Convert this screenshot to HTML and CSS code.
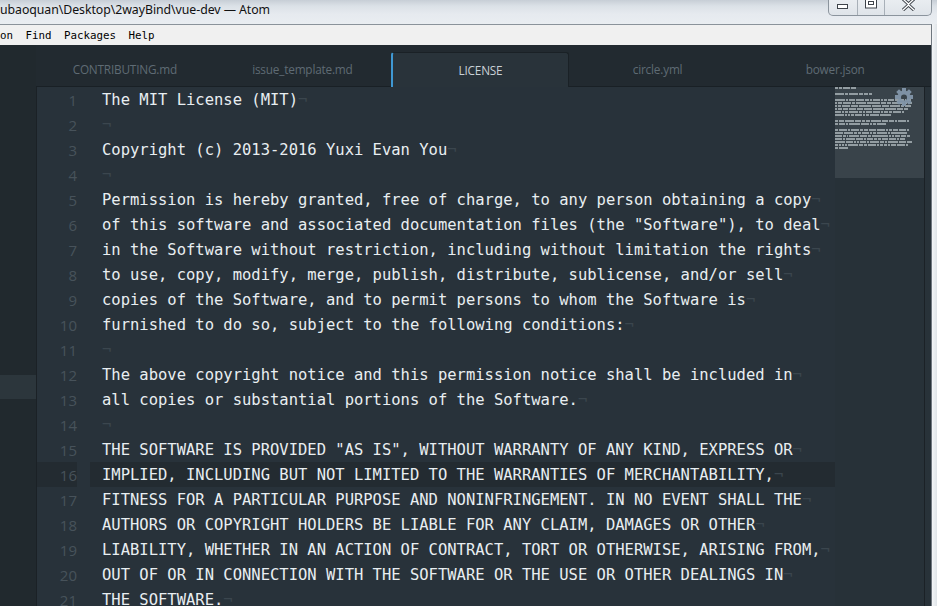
FILE: index.html
```html
<!DOCTYPE html>
<html>
<head>
<meta charset="utf-8">
<link rel="stylesheet" href="styles.css">
</head>
<body>
<div class="titlebar">
  <span class="title">ubaoquan\Desktop\2wayBind\vue-dev — Atom</span>
  <div class="winbtns">
    <div class="wb wb-min"><svg width="12" height="6" viewBox="0 0 12 6"><rect x="0.5" y="0.5" width="10" height="4" fill="#fff" stroke="#3d434a"/></svg></div>
    <div class="wb wb-max"><svg width="13" height="10" viewBox="0 0 13 10"><rect x="0.5" y="-1" width="11" height="9" fill="#fff" stroke="#3d434a"/><rect x="3.5" y="1.5" width="5" height="3" fill="none" stroke="#3d434a"/></svg></div>
    <div class="wb wb-close"><svg width="13" height="11" viewBox="0 0 13 11"><path d="M1 -1 L6.5 4 L12 -1 M1 10 L6.5 5 L12 10" stroke="#3d434a" stroke-width="3.2" fill="none"/><path d="M1 -1 L6.5 4 L12 -1 M1 10 L6.5 5 L12 10" stroke="#fff" stroke-width="1.3" fill="none"/></svg></div>
  </div>
</div>
<div class="main">
  <div class="client">
    <div class="menubar">
      <span>on</span><span>Find</span><span>Packages</span><span>Help</span>
    </div>
    <div class="workspace">
      <div class="tree"><div class="tree-sel"></div></div>
      <div class="pane">
        <div class="tabs">
          <div class="tab">CONTRIBUTING.md</div>
          <div class="tab">issue_template.md</div>
          <div class="tab active">LICENSE</div>
          <div class="tab">circle.yml</div>
          <div class="tab">bower.json</div>
          <div class="tab-fill"></div>
        </div>
        <div class="editor">
          <div class="gutter">
            <div class="gn">1</div><div class="gn">2</div><div class="gn">3</div><div class="gn">4</div><div class="gn">5</div><div class="gn">6</div><div class="gn">7</div><div class="gn">8</div><div class="gn">9</div><div class="gn">10</div><div class="gn">11</div><div class="gn">12</div><div class="gn">13</div><div class="gn">14</div><div class="gn">15</div><div class="gn cur">16</div><div class="gn">17</div><div class="gn">18</div><div class="gn">19</div><div class="gn">20</div><div class="gn">21</div>
          </div>
          <div class="lines">
            <div class="ln"><span class="tx">The MIT License (MIT)</span><span class="eol">¬</span></div>
            <div class="ln"><span class="tx"></span><span class="eol">¬</span></div>
            <div class="ln"><span class="tx">Copyright (c) 2013-2016 Yuxi Evan You</span><span class="eol">¬</span></div>
            <div class="ln"><span class="tx"></span><span class="eol">¬</span></div>
            <div class="ln"><span class="tx">Permission is hereby granted, free of charge, to any person obtaining a copy</span><span class="eol">¬</span></div>
            <div class="ln"><span class="tx">of this software and associated documentation files (the "Software"), to deal</span><span class="eol">¬</span></div>
            <div class="ln"><span class="tx">in the Software without restriction, including without limitation the rights</span><span class="eol">¬</span></div>
            <div class="ln"><span class="tx">to use, copy, modify, merge, publish, distribute, sublicense, and/or sell</span><span class="eol">¬</span></div>
            <div class="ln"><span class="tx">copies of the Software, and to permit persons to whom the Software is</span><span class="eol">¬</span></div>
            <div class="ln"><span class="tx">furnished to do so, subject to the following conditions:</span><span class="eol">¬</span></div>
            <div class="ln"><span class="tx"></span><span class="eol">¬</span></div>
            <div class="ln"><span class="tx">The above copyright notice and this permission notice shall be included in</span><span class="eol">¬</span></div>
            <div class="ln"><span class="tx">all copies or substantial portions of the Software.</span><span class="eol">¬</span></div>
            <div class="ln"><span class="tx"></span><span class="eol">¬</span></div>
            <div class="ln"><span class="tx">THE SOFTWARE IS PROVIDED "AS IS", WITHOUT WARRANTY OF ANY KIND, EXPRESS OR</span><span class="eol">¬</span></div>
            <div class="ln cur"><span class="tx">IMPLIED, INCLUDING BUT NOT LIMITED TO THE WARRANTIES OF MERCHANTABILITY,</span><span class="eol">¬</span></div>
            <div class="ln"><span class="tx">FITNESS FOR A PARTICULAR PURPOSE AND NONINFRINGEMENT. IN NO EVENT SHALL THE</span><span class="eol">¬</span></div>
            <div class="ln"><span class="tx">AUTHORS OR COPYRIGHT HOLDERS BE LIABLE FOR ANY CLAIM, DAMAGES OR OTHER</span><span class="eol">¬</span></div>
            <div class="ln"><span class="tx">LIABILITY, WHETHER IN AN ACTION OF CONTRACT, TORT OR OTHERWISE, ARISING FROM,</span><span class="eol">¬</span></div>
            <div class="ln"><span class="tx">OUT OF OR IN CONNECTION WITH THE SOFTWARE OR THE USE OR OTHER DEALINGS IN</span><span class="eol">¬</span></div>
            <div class="ln"><span class="tx">THE SOFTWARE.</span><span class="eol">¬</span></div>
          </div>
          <div class="minimap">
            <div class="mm-view"></div>
            <svg class="mm-svg" width="89" height="70" viewBox="0 0 89 70"></svg>
            <svg class="gear" width="18" height="18" viewBox="0 0 18 18">
              <defs>
                <mask id="gm">
                  <g fill="#fff">
                    <circle cx="9" cy="9" r="6.4"/>
                    <rect x="7" y="0" width="4" height="4" transform="rotate(0 9 9)"/>
                    <rect x="7" y="0" width="4" height="4" transform="rotate(45 9 9)"/>
                    <rect x="7" y="0" width="4" height="4" transform="rotate(90 9 9)"/>
                    <rect x="7" y="0" width="4" height="4" transform="rotate(135 9 9)"/>
                    <rect x="7" y="0" width="4" height="4" transform="rotate(180 9 9)"/>
                    <rect x="7" y="0" width="4" height="4" transform="rotate(225 9 9)"/>
                    <rect x="7" y="0" width="4" height="4" transform="rotate(270 9 9)"/>
                    <rect x="7" y="0" width="4" height="4" transform="rotate(315 9 9)"/>
                  </g>
                  <circle cx="9" cy="9.5" r="3" fill="#000"/>
                </mask>
              </defs>
              <rect x="0" y="0" width="18" height="18" fill="#8296a9" mask="url(#gm)"/>
            </svg>
          </div>
          <div class="vscroll"></div>
        </div>
      </div>
    </div>
  </div>
  <div class="frame-right"></div>
</div>
<script src="minimap.js"></script>
</body>
</html>
```

FILE: styles.css
```css
html, body {
  margin: 0;
  padding: 0;
}
body {
  width: 937px;
  height: 606px;
  overflow: hidden;
  background: #e4e8ec;
  font-family: "Noto Sans", "DejaVu Sans", sans-serif;
}

/* ---------- title bar ---------- */
.titlebar {
  height: 24px;
  display: flex;
  align-items: flex-start;
  background: linear-gradient(#c7ced6 0px, #dbe1e7 6px, #e6eaef 14px, #e9edf1 24px);
}
.title {
  flex: 1;
  font-family: "Noto Sans", sans-serif;
  font-size: 12.3px;
  line-height: 20px;
  color: #111;
  white-space: nowrap;
  letter-spacing: -0.05px;
}
.winbtns {
  display: flex;
  height: 15px;
  margin-right: 5px;
  border: 1px solid #8b949d;
  border-top: none;
  border-radius: 0 0 5px 5px;
  background: linear-gradient(#e9edf1, #dfe4e9);
  overflow: hidden;
}
.wb {
  display: flex;
  justify-content: center;
  align-items: flex-start;
}
.wb + .wb {
  border-left: 1px solid #a8b0b8;
}
.wb-min { width: 28px; }
.wb-min svg { margin-top: 4px; }
.wb-max { width: 26px; }
.wb-close { width: 46px; }

/* ---------- main ---------- */
.main {
  display: flex;
  height: 582px;
}
.client {
  width: 931px;
  border-top: 1px solid #8a929a;
  border-right: 1px solid #6f777f;
  display: flex;
  flex-direction: column;
}
.frame-right {
  flex: 1;
  background: linear-gradient(90deg, #f3f5f7, #dfe4e8);
}

.menubar {
  height: 20px;
  background: #f0f0f0;
  display: flex;
  align-items: center;
  gap: 12.5px;
  font-family: "DejaVu Sans Mono", monospace;
  font-size: 10.8px;
  color: #000;
}

/* ---------- workspace ---------- */
.workspace {
  flex: 1;
  display: flex;
  background: #222a30;
  min-height: 0;
}
.tree {
  width: 36px;
  background: #21292e;
}
.tree-sel {
  margin-top: 330px;
  height: 24px;
  background: #2c363c;
}
.pane {
  flex: 1;
  display: flex;
  flex-direction: column;
  min-width: 0;
  min-height: 0;
}

.tabs {
  height: 35px;
  padding-top: 7px;
  display: flex;
  flex: none;
  background: #222a30;
}
.tab {
  flex: 0 0 177.6px;
  box-sizing: border-box;
  display: flex;
  align-items: center;
  justify-content: center;
  font-family: "Open Sans", "Noto Sans", sans-serif;
  font-size: 11.8px;
  color: #5f6b74;
  border-bottom: 1px solid #192025;
  padding-bottom: 1px;
  letter-spacing: -0.2px;
}
.tab.active {
  background: #29333a;
  color: #c9d1d7;
  border-bottom: none;
  border-top: 1px solid #1a2126;
  border-right: 1px solid #1a2126;
  border-left: 2px solid #3f98d3;
  border-radius: 3px 3px 0 0;
  padding-bottom: 0;
}
.tab-fill {
  flex: 1;
  border-bottom: 1px solid #192025;
}

.editor {
  flex: 1;
  display: flex;
  background: #28323a;
  border-left: 1px solid #1b2126;
  min-height: 0;
  overflow: hidden;
}
.gutter {
  width: 53px;
  box-sizing: border-box;
  padding-right: 13px;
  font-family: "Open Sans", sans-serif;
  font-size: 15px;
  color: #47525a;
  text-align: right;
  flex: none;
}
.gn {
  height: 25px;
  line-height: 25px;
  box-sizing: border-box;
  padding-top: 1px;
}
.gn.cur, .ln.cur {
  background: #232b31;
}
.lines {
  width: 745px;
  flex: none;
  box-sizing: border-box;
  font-family: "DejaVu Sans Mono", monospace;
  font-size: 15.5px;
  color: #e8eef1;
  overflow: hidden;
}
.ln {
  height: 25px;
  line-height: 25px;
  box-sizing: border-box;
  padding-top: 1px;
  padding-left: 12px;
  white-space: pre;
}
.eol {
  color: #3b464e;
}

.minimap {
  width: 89px;
  flex: none;
  position: relative;
  background: #273138;
}
.mm-view {
  height: 91px;
  background: #39434a;
}
.mm-svg {
  position: absolute;
  left: 0;
  top: 0;
  fill: #939da2;
}
.gear {
  position: absolute;
  left: 60px;
  top: 1px;
  opacity: 0.95;
}
.vscroll {
  flex: 1;
  border-left: 1px solid #1b2126;
  background: #283239;
}
```

FILE: minimap.js
```js
(function () {
  var lines = document.querySelectorAll('.lines .tx');
  var svg = document.querySelector('.mm-svg');
  var out = '';
  for (var i = 0; i < lines.length; i++) {
    var t = lines[i].textContent;
    var re = /\S+/g, m;
    while ((m = re.exec(t))) {
      out += '<rect x="' + m.index + '" y="' + (i * 3) + '" width="' + m[0].length + '" height="2"/>';
    }
  }
  svg.innerHTML = out;
})();
```
